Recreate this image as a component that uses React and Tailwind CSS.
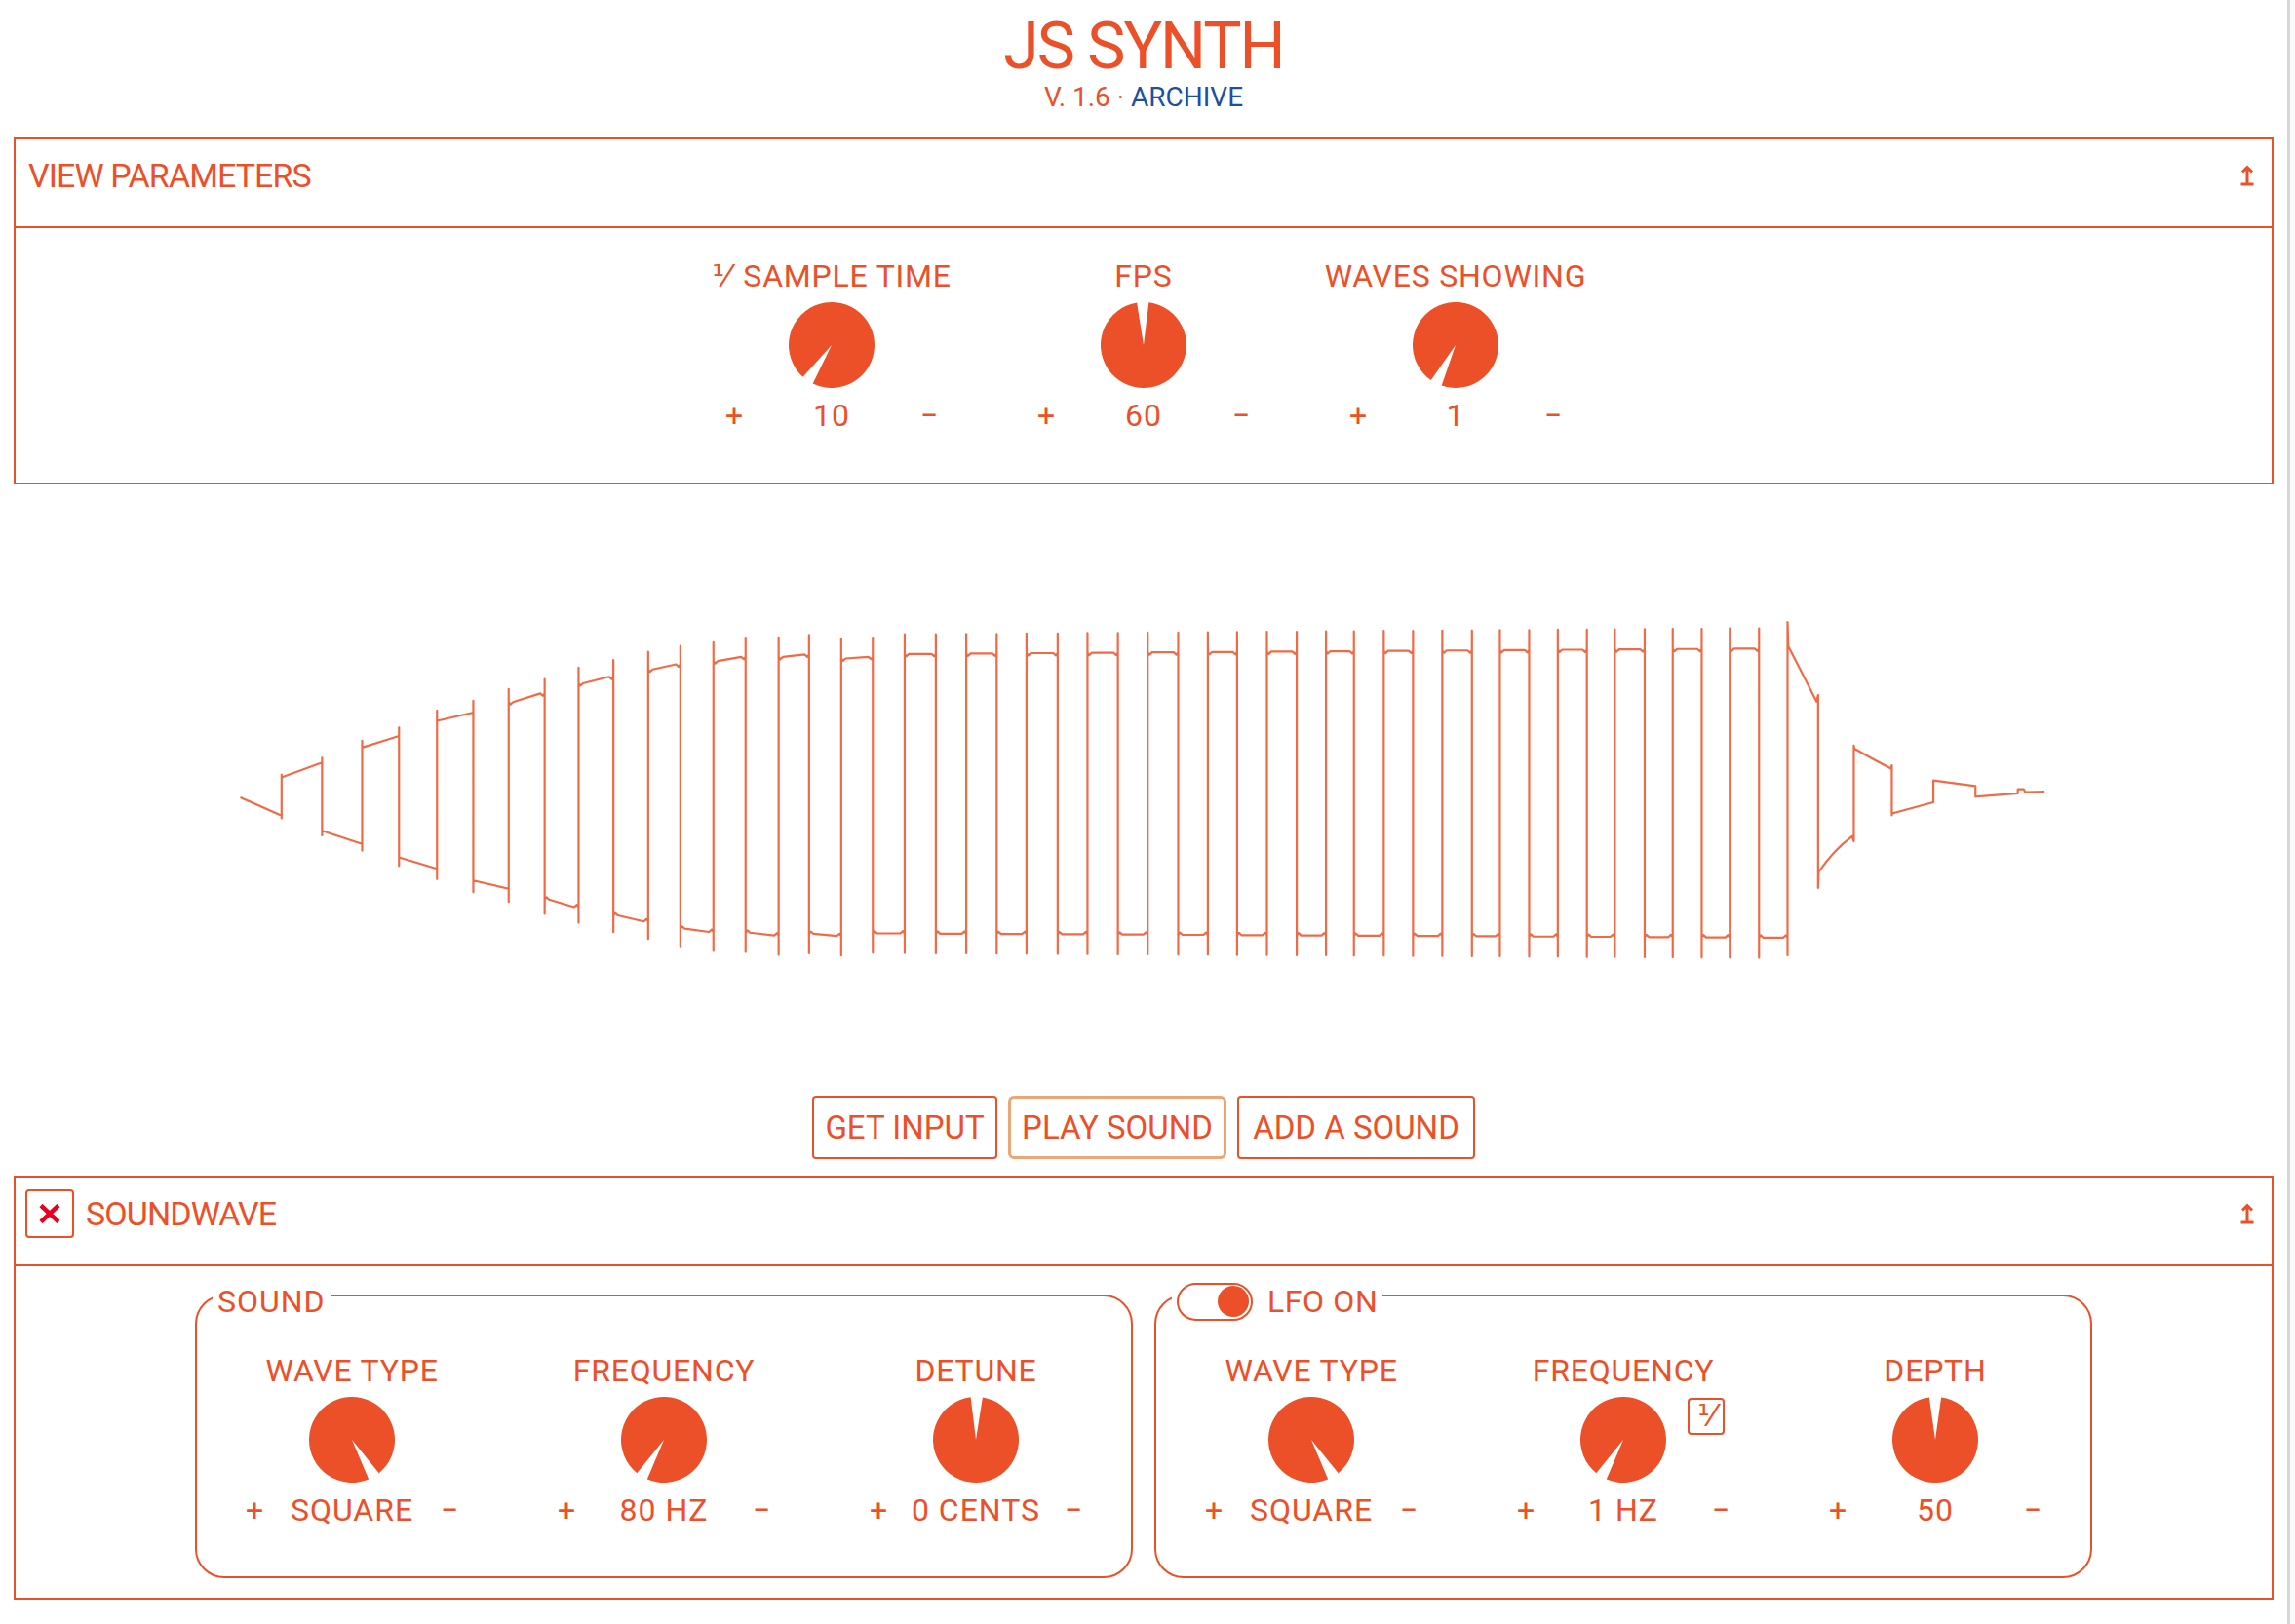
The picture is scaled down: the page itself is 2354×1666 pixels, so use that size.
import React from "react";

const ORANGE = "#ec5028";

function buildWave() {
  const segs = [
    [164.5, 192.7, 544, 556.5],
    [192.7, 220.4, 530.3, 520.2],
    [220.4, 247.8, 566.8, 575.8],
    [247.8, 273, 509.9, 502],
    [273, 299, 585, 592.8],
    [299, 323.8, 491.7, 486],
    [323.8, 348, 600.8, 606.5],
    [348, 372.6, 478.8, 472.9],
    [372.6, 395.8, 613.8, 619],
    [395.8, 419.6, 466, 461.5],
    [419.6, 443.4, 624.7, 628.8],
    [443.4, 465.4, 456.5, 453],
    [465.4, 488, 633.8, 636],
    [488, 510, 450.8, 447.9],
    [510, 532.6, 636.5, 638.4],
    [532.6, 553.4, 447.9, 446.3],
    [553.4, 575.4, 637.3, 638.8],
    [575.4, 597, 449, 447.9],
  ];
  const edges = [
    597, 618.8, 640.1, 660.9, 681.7, 702.1, 723.4, 743.8, 764.6, 785, 805.8,
    826.1, 846.1, 866.5, 886.9, 906.9, 926, 946.4, 966.4, 986.4, 1006.7,
    1025.8, 1045.8, 1065.4, 1085.3, 1104.4, 1124.8, 1144, 1163.8, 1183, 1203,
    1222.5,
  ];
  for (let i = 0; i < edges.length - 1; i++) {
    const t = (edges[i] - 597) / (1222.5 - 597);
    const top = 446 - 4 * t;
    const bottom = 637 + 3 * t;
    const y = i % 2 === 0 ? bottom : top;
    segs.push([edges[i], edges[i + 1], y, y]);
  }

  let d = `M${segs[0][0]} ${segs[0][2]} L${segs[0][1]} ${segs[0][3]}`;
  for (let i = 1; i < segs.length; i++) {
    const a = segs[i - 1][3];
    const b = segs[i][2];
    const x = segs[i][0];
    const [, x1, , y1] = segs[i];
    const os = Math.abs(a - b) * 0.07;
    const s = b < a ? 1 : -1;
    d += ` L${x} ${a + s * os} L${x} ${b - s * os} L${x} ${b}`;
    // small ringing near the corners of the larger steps
    if (Math.abs(a - b) > 120) {
      const r = s * 1.6;
      d += ` L${x + 1.2} ${b + r} L${x + 3} ${b} L${x1 - 3} ${y1} L${x1 - 1.2} ${y1 + r}`;
    }
    d += ` L${x1} ${y1}`;
  }
  // release tail
  d +=
    " L1222.5 652 L1222.5 424 L1223 440.7 Q1232 458 1242.3 478.5 L1243.4 474 L1243.4 606 L1243.8 595" +
    " Q1254 580 1266.7 570.6 L1267.8 574 L1267.8 508.5 L1268.2 510.7 Q1281 518 1293.3 524.4" +
    " L1293.8 522 L1293.8 556.2 L1294 555 L1322.2 547.3 L1322.2 532.4 L1351 536.2 L1351 543.5" +
    " L1379.9 541.3 L1380 538.4 L1384 538.4 L1385 540.4 L1398.3 540";
  return d;
}

const WAVE = buildWave();

function Knob({ angle, gap = 16 }) {
  const r = 44;
  const s = ((angle + gap / 2) * Math.PI) / 180;
  const e = ((angle - gap / 2) * Math.PI) / 180;
  const pt = (a) =>
    `${(r + r * Math.cos(a)).toFixed(2)} ${(r + r * Math.sin(a)).toFixed(2)}`;
  return (
    <svg width="88" height="88" viewBox="0 0 88 88" className="block">
      <path d={`M${r} ${r} L${pt(s)} A${r} ${r} 0 1 1 ${pt(e)} Z`} fill={ORANGE} />
    </svg>
  );
}

function Control({ label, value, angle, extra }) {
  return (
    <div className="w-[320px] shrink-0 flex flex-col items-center">
      <div className="h-[36px] text-[32px] leading-[36px] tracking-[0.8px] whitespace-nowrap">
        {label}
      </div>
      <div className="relative mt-[9px]">
        <Knob angle={angle} />
        {extra}
      </div>
      <div className="mt-[10px] w-[220px] flex items-center justify-between text-[32px] leading-[36px]">
        <span className="w-[20px] text-center">+</span>
        <span className="whitespace-nowrap tracking-[1px]">{value}</span>
        <span className="w-[20px] text-center">−</span>
      </div>
    </div>
  );
}

function CollapseIcon() {
  return (
    <svg width="14" height="22" viewBox="0 0 14 22" className="block">
      <path d="M7 2.5V19.5M2 7.5L7 2.5L12 7.5" fill="none" stroke={ORANGE} strokeWidth="3" />
      <path d="M0.5 20H13.5" stroke={ORANGE} strokeWidth="3" />
    </svg>
  );
}

function Panel({ title, closable, children }) {
  return (
    <section className="border-2 border-[#ec5028]">
      <div className="h-[91px] border-b-2 border-[#ec5028] pt-[12px] pl-[10px] pr-[18px]">
        <div className="h-[50px] flex items-center">
          {closable ? (
            <button className="w-[50px] h-[50px] mr-[12px] border-2 border-[#ec5028] rounded-[4px] flex items-center justify-center">
              <svg width="22" height="20" viewBox="0 0 22 20" className="block">
                <path d="M2 1.5L20 18.5M20 1.5L2 18.5" stroke="#e6001e" strokeWidth="4.5" />
              </svg>
            </button>
          ) : (
            <span className="w-[3px]" />
          )}
          <span className="text-[34px] leading-[40px] tracking-[-0.9px]">{title}</span>
          <span className="ml-auto">
            <CollapseIcon />
          </span>
        </div>
      </div>
      {children}
    </section>
  );
}

function Group({ legend, children }) {
  return (
    <fieldset className="w-[962px] min-w-0 border-2 border-[#ec5028] rounded-[30px] pb-[50px]">
      <legend className="ml-[16px] px-[5px] pt-[12px]">
        <div className="h-[40px] flex items-center gap-[15px]">{legend}</div>
      </legend>
      <div className="pt-[33px] flex justify-center">{children}</div>
    </fieldset>
  );
}

export default function App() {
  return (
    <div className="min-h-screen bg-white text-[#ec5028] font-['Roboto','DejaVu_Sans',sans-serif]">
      <div className="w-[2318px] ml-[14px] pt-[12px] pb-[26px]">
        <h1 className="text-center text-[66px] leading-[72px] font-normal tracking-[-2px]">
          JS SYNTH
        </h1>
        <div className="-mt-[1px] text-center text-[28px] leading-[34px]">
          V. 1.6 · <span className="text-[#1f4fa1]">ARCHIVE</span>
        </div>

        <div className="mt-[24px]">
          <Panel title="VIEW PARAMETERS">
            <div className="pt-[31px] pb-[51px] flex justify-center">
              <Control
                label={
                  <>
                    <span className="inline-block align-top mr-[14px] text-[32px] leading-[36px] tracking-normal">
                      ⅟
                    </span>
                    SAMPLE TIME
                  </>
                }
                value="10"
                angle={124}
              />
              <Control label="FPS" value="60" angle={269} />
              <Control label="WAVES SHOWING" value="1" angle={117} />
            </div>
          </Panel>
        </div>

        <div className="mt-[135px] flex justify-center">
          <svg width="1869" height="360" viewBox="160 420 1245 240" className="block">
            <path
              d={WAVE}
              fill="none"
              stroke="#ee5a32"
              strokeOpacity="0.9"
              strokeWidth="2.2"
              strokeLinejoin="round"
              vectorEffect="non-scaling-stroke"
            />
          </svg>
        </div>

        <div className="mt-[132px] flex justify-center gap-[11px] text-[33px]">
          <button className="w-[190px] h-[65px] border-2 border-[#ec5028] rounded-[4px] text-[#ec5028]">
            GET INPUT
          </button>
          <button className="w-[224px] h-[65px] border-[3px] border-[#eaa674] rounded-[6px] text-[#ec5028]">
            PLAY SOUND
          </button>
          <button className="w-[244px] h-[65px] border-2 border-[#ec5028] rounded-[4px] text-[#ec5028]">
            ADD A SOUND
          </button>
        </div>

        <div className="mt-[17px]">
          <Panel title="SOUNDWAVE" closable>
            <div className="pt-[4px] pb-[20px] flex justify-center gap-[22px]">
              <Group
                legend={
                  <span className="text-[32px] leading-[36px] tracking-[1px]">SOUND</span>
                }
              >
                <Control label="WAVE TYPE" value="SQUARE" angle={59} />
                <Control label="FREQUENCY" value="80 HZ" angle={121} />
                <Control label="DETUNE" value="0 CENTS" angle={271} />
              </Group>
              <Group
                legend={
                  <>
                    <span className="w-[78px] h-[39px] rounded-full border-2 border-[#ec5028] flex items-center justify-end pr-[2px]">
                      <span className="w-[32px] h-[32px] rounded-full bg-[#ec5028]" />
                    </span>
                    <span className="text-[32px] leading-[36px] tracking-[0.6px]">LFO ON</span>
                  </>
                }
              >
                <Control label="WAVE TYPE" value="SQUARE" angle={59} />
                <Control
                  label="FREQUENCY"
                  value="1 HZ"
                  angle={121}
                  extra={
                    <span className="absolute left-[110px] top-[1px] w-[38px] h-[38px] border-2 border-[#ec5028] rounded-[4px] text-[32px] leading-[32px] text-center">
                      ⅟
                    </span>
                  }
                />
                <Control label="DEPTH" value="50" angle={270} />
              </Group>
            </div>
          </Panel>
        </div>
      </div>
      <div className="fixed top-0 right-0 h-full w-[8px] border-l-[3px] border-[#d6d6d6] bg-[#fafafa]" />
    </div>
  );
}
